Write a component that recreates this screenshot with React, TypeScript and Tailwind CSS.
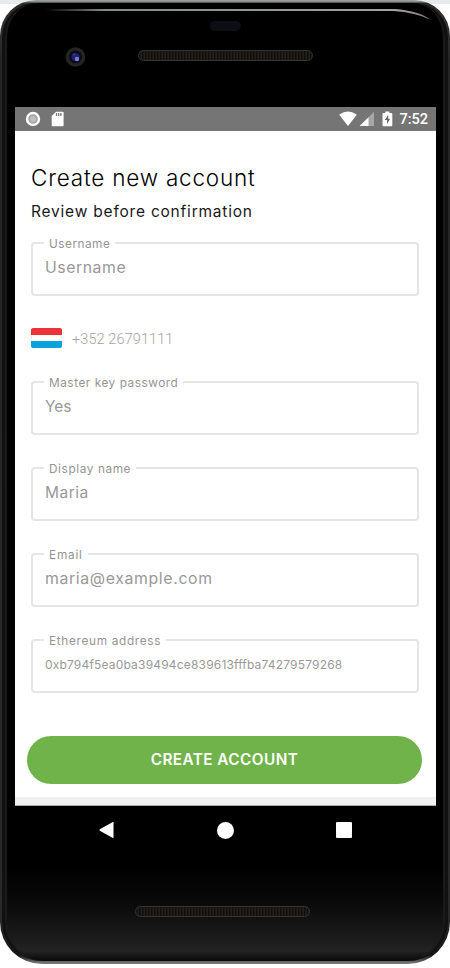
import React from "react";

type FieldProps = { label: string; value: string; labelClass: string; valueClass: string; className?: string };

function Field({ label, value, labelClass, valueClass, className = "" }: FieldProps) {
  return (
    <div className={`relative flex h-[54px] w-[388px] shrink-0 rounded-[4px] border-2 border-[#e5e5e5] pl-3 ${className}`}>
      <span className={`absolute -top-[8px] left-[11px] bg-white px-[5px] text-[11.8px] leading-4 whitespace-nowrap text-[#959595] ${labelClass}`}>
        {label}
      </span>
      <span className={`mt-[14px] h-5 leading-5 whitespace-nowrap text-[#999] ${valueClass}`}>{value}</span>
    </div>
  );
}

function Speaker({ className }: { className: string }) {
  return (
    <div className={`h-[11px] w-[175px] shrink-0 rounded-full border border-[#353432] bg-[repeating-linear-gradient(90deg,#12100e_0px,#12100e_1px,#221f1a_2px,#221f1a_3px)] ${className}`} />
  );
}

function StatusBar() {
  return (
    <div className="flex h-6 shrink-0 items-center bg-[#757575] pr-[8px] pl-[10px] text-white">
      <svg width="16" height="16" viewBox="0 0 16 16">
        <circle cx="8" cy="8" r="6" fill="#a4a4a4" stroke="#fff" strokeWidth="2.4" />
        <circle cx="8" cy="8" r="3" fill="#c0c0c0" />
      </svg>
      <svg className="ml-[10px]" width="13" height="16" viewBox="0 0 13 16">
        <path d="M5 .8h6.6q1 0 1 1v12.4q0 1-1 1H1.7q-1 0-1-1V5z" fill="#fff" />
        <path d="M5.5 2v3M7.7 2v3M9.9 2v3" stroke="#777" strokeWidth="1.3" />
      </svg>
      <svg className="ml-auto" width="18" height="16" viewBox="0 0 18 16">
        <path d="M.2 3.8Q9-2.8 17.8 3.8L9 15z" fill="#fff" />
      </svg>
      <svg className="ml-[2px]" width="16" height="16" viewBox="0 0 16 16">
        <path d="M15 .7V15H.7z" fill="#a6a6a6" />
        <path d="M9.5 6.2V15H.7z" fill="#fff" />
      </svg>
      <svg className="ml-[7px]" width="11" height="16" viewBox="0 0 11 16">
        <path d="M3.3.5h4v1.4h2q1 0 1 1v11.3q0 1-1 1H1.5q-1 0-1-1V2.900q0-1 1-1h1.8z" fill="#fff" />
        <path d="M6.2 3.8 2.8 9H5v4l3.200-5.200H6.200z" fill="#686868" />
      </svg>
      <span className="mt-px ml-[6px] font-[Roboto] text-[14.5px] leading-6 font-medium">7:52</span>
    </div>
  );
}

export default function App() {
  return (
    <div className="h-[968px] w-[450px] overflow-hidden bg-white font-[Inter,sans-serif]">
      <div className="h-[964px] w-[450px] bg-[linear-gradient(#e6eaec_0px,#e6eaec_4px,#ffffff_4px)]">
        <div className="h-[964px] rounded-t-[36px] rounded-b-[42px] bg-[linear-gradient(#a0a3a2_0px,#858988_2px,#292929_3px,#303030_30px,#252525_60px,#292929_920px,#151515_955px,#505050_960px,#777_963px)] px-[2px] pt-[3px] pb-[3px]">
          <div className="flex h-[958px] flex-col rounded-t-[34px] rounded-b-[40px] border-x-[3px] border-[#111] bg-[linear-gradient(#000_0%,#000_90%,#0a0a0a_94%,#222_99%,#080808_100%)] px-[10px] shadow-[inset_2px_0_1px_#1b1b1b,inset_-2px_0_1px_#1b1b1b]">
            <div className="flex h-[104px] shrink-0 flex-col">
              <svg className="mt-[5px] shrink-0" width="420" height="20" viewBox="0 0 420 20">
                <defs>
                  <linearGradient id="rim" gradientUnits="userSpaceOnUse" x1="30" y1="0" x2="420" y2="0">
                    <stop offset="0" stopColor="#000" />
                    <stop offset=".15" stopColor="#858988" />
                    <stop offset=".9" stopColor="#a0a3a2" />
                    <stop offset="1" stopColor="#777" />
                  </linearGradient>
                </defs>
                <path d="M30 1H380Q405 3 415 11.500Q401 4.500 378 3H30z" fill="url(#rim)" />
              </svg>
              <div className="mx-auto -mt-[7px] h-[10px] w-[31px] shrink-0 rounded-full bg-[#0b0e12]" />
              <div className="mt-[15px] flex items-center pl-[49px]">
                <svg width="22" height="22" viewBox="0 0 22 22">
                  <circle cx="11.500" cy="11" r="9.800" fill="#252423" />
                  <circle cx="11.500" cy="11" r="6.500" fill="#090b1b" />
                  <circle cx="11.500" cy="11" r="4" fill="#20216a" />
                  <circle cx="13" cy="13" r="2.200" fill="#7e7de0" />
                  <circle cx="10" cy="8.500" r="1" fill="#4343a6" />
                </svg>
                <Speaker className="-mt-[4px] ml-[52px]" />
              </div>
            </div>

            <div className="flex h-[699px] w-[421px] shrink-0 flex-col bg-white">
              <StatusBar />
              <main className="flex h-[666px] shrink-0 flex-col px-4">
                <h1 className="mt-[31px] h-8 text-[22.5px] leading-8 font-[350] tracking-[0.8px] whitespace-nowrap text-black">Create new account</h1>
                <p className="mt-[6px] h-6 text-[15.5px] leading-6 tracking-[0.79px] whitespace-nowrap text-[#191919]">Review before confirmation</p>
                <Field className="mt-[18px]" label="Username" value="Username" labelClass="tracking-[0.5px]" valueClass="text-[15.8px] tracking-[0.55px]" />
                <div className="mt-[31px] flex h-[22px] items-center">
                  <div className="-mt-px flex h-5 w-[31px] flex-col overflow-hidden rounded-[2px]">
                    <div className="h-[7px] bg-[#ed3338]" />
                    <div className="h-[6px] border-x border-[#eee] bg-white" />
                    <div className="h-[7px] bg-[#0ba2dc]" />
                  </div>
                  <span className="mt-[3px] ml-[10px] font-[Roboto] text-[14.5px] leading-[22px] font-light tracking-[0.1px] whitespace-nowrap text-[#a3a3a3]">+352 26791111</span>
                </div>
                <Field className="mt-[32px]" label="Master key password" value="Yes" labelClass="tracking-[0.54px]" valueClass="text-[15.5px] tracking-[0px]" />
                <Field className="mt-8" label="Display name" value="Maria" labelClass="tracking-[0.6px]" valueClass="text-[15.5px] tracking-[0.5px]" />
                <Field className="mt-8" label="Email" value="maria@example.com" labelClass="tracking-[0.8px]" valueClass="text-[15.8px] tracking-[0.65px]" />
                <Field className="mt-8" label="Ethereum address" value="0xb794f5ea0ba39494ce839613fffba74279579268" labelClass="tracking-[0.68px]" valueClass="text-[12px] tracking-[0.18px]" />
                <button className="-mr-0.5 -ml-1 mt-[43px] h-12 w-[395px] shrink-0 rounded-full bg-[#71b34b] text-[15.3px] font-semibold tracking-[0.45px] whitespace-nowrap text-white">CREATE ACCOUNT</button>
              </main>
              <div className="h-[9px] shrink-0 border-b border-[#aaa] bg-[#f1f1f1]" />
            </div>

            <nav className="mt-[14px] flex h-5 shrink-0 items-center pl-[83px]">
              <svg width="17" height="18" viewBox="0 0 17 18"><path d="M15.500 1.200v15.600q0 .6-.6.3L1.800 9.700q-1-.7 0-1.400L14.900 1q.6-.3.6.2z" fill="#fff" /></svg>
              <div className="ml-[102px] size-[17px] rounded-full bg-white" />
              <div className="ml-[102px] size-4 rounded-[1px] bg-white" />
            </nav>
            <Speaker className="mt-[66px] ml-[120px]" />
          </div>
        </div>
      </div>
    </div>
  );
}
